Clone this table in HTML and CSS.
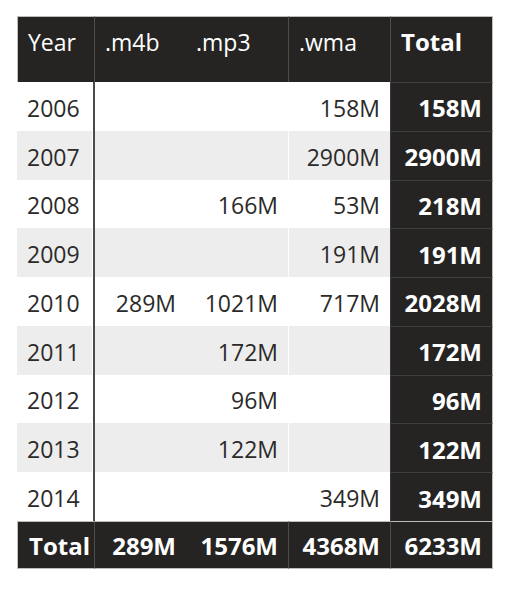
FILE: index.html
```html
<!DOCTYPE html>
<html>
<head>
<meta charset="utf-8">
<link rel="stylesheet" href="styles.css">
</head>
<body>
<div class="matrix">
  <div class="c h year first">Year</div>
  <div class="c h">.m4b</div>
  <div class="c h">.mp3</div>
  <div class="c h div">.wma</div>
  <div class="c h tot last">Total</div>

  <div class="c year">2006</div><div class="c num"></div><div class="c num"></div><div class="c num wma">158M</div><div class="c rt">158M</div>
  <div class="c year alt">2007</div><div class="c num alt"></div><div class="c num alt"></div><div class="c num wma alt">2900M</div><div class="c rt">2900M</div>
  <div class="c year">2008</div><div class="c num"></div><div class="c num">166M</div><div class="c num wma">53M</div><div class="c rt">218M</div>
  <div class="c year alt">2009</div><div class="c num alt"></div><div class="c num alt"></div><div class="c num wma alt">191M</div><div class="c rt">191M</div>
  <div class="c year">2010</div><div class="c num">289M</div><div class="c num">1021M</div><div class="c num wma">717M</div><div class="c rt">2028M</div>
  <div class="c year alt">2011</div><div class="c num alt"></div><div class="c num alt">172M</div><div class="c num wma alt"></div><div class="c rt">172M</div>
  <div class="c year">2012</div><div class="c num"></div><div class="c num">96M</div><div class="c num wma"></div><div class="c rt">96M</div>
  <div class="c year alt">2013</div><div class="c num alt"></div><div class="c num alt">122M</div><div class="c num wma alt"></div><div class="c rt">122M</div>
  <div class="c year">2014</div><div class="c num"></div><div class="c num"></div><div class="c num wma">349M</div><div class="c rt">349M</div>

  <div class="c t year first">Total</div>
  <div class="c t num">289M</div>
  <div class="c t num">1576M</div>
  <div class="c t num div">4368M</div>
  <div class="c t num div last">6233M</div>
</div>
</body>
</html>
```

FILE: styles.css
```css
html, body {
  margin: 0;
  padding: 0;
  background: #ffffff;
}

body {
  font-family: "Open Sans", "Noto Sans", sans-serif;
  font-size: 23px;
  color: #2b2a29;
}

.matrix {
  display: grid;
  grid-template-columns: 78px 91px 102px 102px 103px;
  grid-template-rows: 66px repeat(9, 48.78px) 48px;
  width: 476px;
  margin: 16px 0 0 17px;
}

.c {
  box-sizing: border-box;
  display: flex;
  align-items: center;
  padding: 3px 10px 0 10px;
  line-height: 30px;
  white-space: nowrap;
  background: #ffffff;
}

.num {
  justify-content: flex-end;
}

.alt {
  background: #ededed;
}

.year {
  border-right: 2px solid #4a4a4a;
  box-shadow: inset -1px 0 #ffffff;
}

.wma {
  border-left: 1px solid rgba(255, 255, 255, 0.9);
}

/* header */
.h {
  background: #252423;
  color: #ffffff;
  align-items: flex-start;
  padding-top: 10px;
  border-top: 1px solid #bdbdbd;
  box-shadow: none;
}

.h.year {
  border-right: 1px solid #4d4d4d;
  padding-right: 10px;
}

.h.div {
  border-left: 1px solid #4d4d4d;
}

.h.tot {
  font-size: 24px;
  font-weight: 700;
  border-left: 1px solid #4d4d4d;
  padding-left: 10px;
}

.first {
  border-left: 1px solid #bdbdbd;
}

.last {
  border-right: 1px solid #bdbdbd;
}

/* total column */
.rt {
  background: #252423;
  color: #ffffff;
  font-size: 24px;
  font-weight: 700;
  justify-content: flex-end;
  border-top: 1px solid #3e3e3e;
  border-left: 1px solid #3a3a3a;
  border-right: 1px solid #bdbdbd;
}

/* total row */
.t {
  background: #252423;
  color: #ffffff;
  font-size: 24px;
  font-weight: 700;
  border-top: 1px solid #bdbdbd;
  border-bottom: 1px solid #bdbdbd;
  box-shadow: none;
}

.t.year {
  border-right: 1px solid #4d4d4d;
  padding-left: 11px;
}

.t.div {
  border-left: 1px solid #4d4d4d;
}
```
